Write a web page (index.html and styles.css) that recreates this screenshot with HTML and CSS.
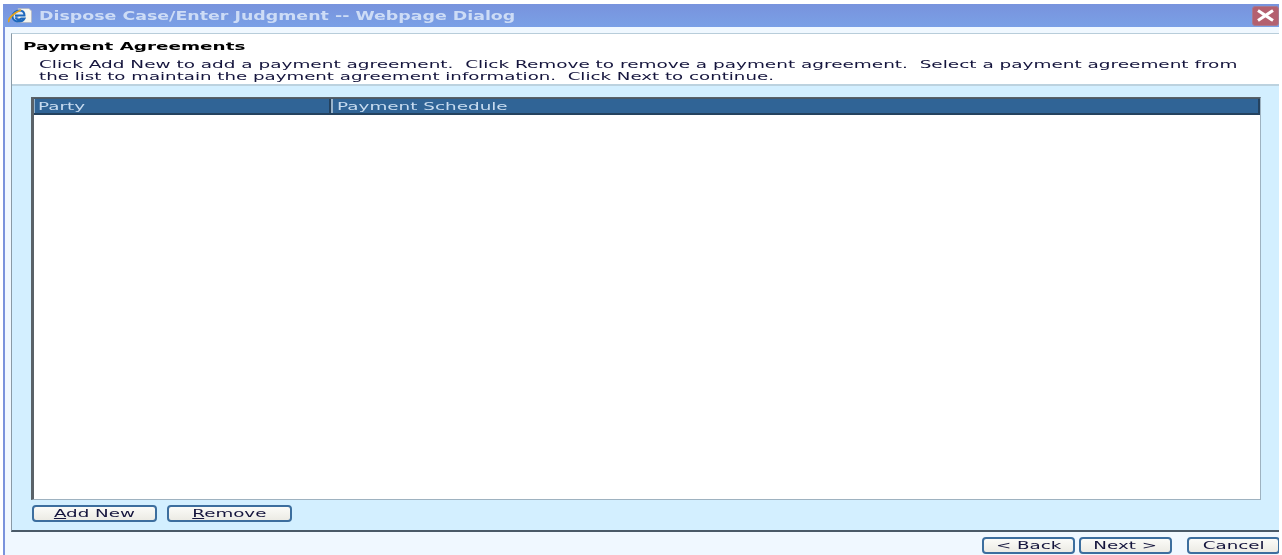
FILE: index.html
```html
<!DOCTYPE html>
<html lang="en">
  <head>
    <meta charset="UTF-8" />
    <title>Dispose Case/Enter Judgment -- Webpage Dialog</title>
    <link rel="stylesheet" href="styles.css">
  </head>
  <body>
    <div class="dialog">
      <div class="title-bar">
        <svg class="ie-icon" width="24" height="15" viewBox="0 0 24 15">
          <path d="M10 .5h11l2.500 2.500v11.500H10z" fill="#f6f6ee" stroke="#b4b8c4" stroke-width="0.8" />
          <path d="M7 7.500h9.500C16.500 4 14 2.500 11.500 2.500 8 2.500 4.500 5 4.500 8.500c0 3.500 3.500 5 6.500 5 2.500 0 4.500-1 5.500-3h-3.200c-1.500 1.800-5 1.300-5.800-1" fill="#dfeaf8" stroke="#1c68bc" stroke-width="2" />
          <path d="M1 14C-.5 11.500 5 5 13 2" fill="none" stroke="#e2a21e" stroke-width="1.800" />
        </svg>
        <span class="wide title-text">Dispose Case/Enter Judgment -- Webpage Dialog</span>
        <div class="close-button">
          <svg width="21" height="13" viewBox="0 0 21 13">
            <path d="M3 1.500 18 11.500M18 1.500 3 11.500" stroke="#fff" stroke-width="3" />
          </svg>
        </div>
      </div>

      <div class="dialog-body">
        <div class="panel">
          <div class="panel-header">
            <h1><span class="wide">Payment Agreements</span></h1>
            <p>
              <span class="wide">Click Add New to add a payment agreement.&nbsp; Click Remove to remove a payment agreement.&nbsp; Select a payment agreement from</span>
              <span class="wide line-two">the list to maintain the payment agreement information.&nbsp; Click Next to continue.</span>
            </p>
          </div>
          <div class="panel-main">
            <div class="list-box">
              <div class="list-head">
                <div class="col-party"><span class="wide">Party</span></div>
                <div class="col-schedule"><span class="wide">Payment Schedule</span></div>
              </div>
            </div>
            <div class="list-actions">
              <button type="button" class="btn btn-list"><span class="wide-center"><u>A</u>dd New</span></button>
              <button type="button" class="btn btn-list"><span class="wide-center"><u>R</u>emove</span></button>
            </div>
          </div>
        </div>
        <div class="footer">
          <button type="button" class="btn btn-nav"><span class="wide-center">&lt; Back</span></button>
          <button type="button" class="btn btn-nav"><span class="wide-center">Next &gt;</span></button>
          <button type="button" class="btn btn-nav btn-cancel"><span class="wide-center">Cancel</span></button>
        </div>
      </div>
    </div>
  </body>
</html>
```

FILE: styles.css
```css
html,
body {
  margin: 0;
  height: 100%;
  overflow: hidden;
}
body {
  background-color: white;
  font-family: "DejaVu Sans", Verdana, sans-serif;
  font-size: 11px;
  color: #14143c;
  padding: 4px 3px 0 3px;
  box-sizing: border-box;
}
.wide {
  display: inline-block;
  white-space: nowrap;
  transform: scaleX(1.67);
  transform-origin: left center;
  filter: blur(0.3px);
}
.wide-center {
  display: inline-block;
  white-space: nowrap;
  transform: scaleX(1.66);
  filter: blur(0.3px);
}
.dialog {
  height: 100%;
  display: flex;
  flex-direction: column;
  overflow: hidden;
}
.title-bar {
  height: 23px;
  flex: none;
  display: flex;
  align-items: center;
  background: linear-gradient(#7893dd, #7aa0e6);
  padding-left: 5px;
}
.ie-icon {
  margin-right: 7px;
  flex: none;
}
.title-text {
  color: #cddcf6;
  font-weight: bold;
  font-size: 12px;
  transform: scaleX(1.45);
}
.close-button {
  margin-left: auto;
  width: 27px;
  height: 20px;
  box-sizing: border-box;
  background-color: #b4606f;
  border: 1px solid #a8798e;
  border-radius: 3px;
  display: flex;
  align-items: center;
  justify-content: center;
}
.dialog-body {
  flex: 1;
  display: flex;
  flex-direction: column;
  background-color: #f0f8ff;
  border-left: 2px solid #7a93dc;
  padding: 6px 0 0 6px;
  min-height: 0;
}
.panel {
  height: 499px;
  flex: none;
  display: flex;
  flex-direction: column;
  border-left: 1px solid #8a9aa6;
  border-top: 1px solid #b8cdda;
  border-bottom: 2px solid #4a5a68;
  box-sizing: border-box;
}
.panel-header {
  height: 52px;
  flex: none;
  box-sizing: border-box;
  background-color: white;
  border-bottom: 2px solid #bcd2df;
  padding: 6px 0 0 11px;
}
.panel-header h1 {
  margin: 0;
  font-size: 11px;
  line-height: 13px;
  font-weight: bold;
  color: #000;
}
.panel-header p {
  margin: 6px 0 0 16px;
  font-size: 11px;
  line-height: 12px;
  white-space: nowrap;
}
.panel-header p .wide {
  display: block;
  transform: scaleX(1.676);
}
.panel-header p .line-two {
  transform: scaleX(1.654);
}
.panel-main {
  flex: 1;
  display: flex;
  flex-direction: column;
  background-color: #d3efff;
  padding: 11px 18px 0 19px;
  min-height: 0;
}
.list-box {
  height: 403px;
  flex: none;
  box-sizing: border-box;
  background-color: white;
  border-left: 3px solid #5a6268;
  border-top: 1px solid #5a6268;
  border-right: 1px solid #9eb2c0;
  border-bottom: 1px solid #9eb2c0;
}
.list-head {
  height: 17px;
  display: flex;
  background-color: #306496;
  border-top: 1px solid #4a5a68;
  border-bottom: 2px solid #24425f;
  box-sizing: border-box;
  color: #c8dcf0;
  font-size: 11px;
  line-height: 15px;
}
.col-party {
  width: 297px;
  flex: none;
  padding-left: 3px;
  box-sizing: border-box;
  border-left: 1px solid #8fb0cc;
  border-right: 2px solid #24425f;
}
.col-schedule {
  flex: 1;
  padding-left: 4px;
  border-left: 2px solid #9ab4cc;
  border-right: 2px solid #24425f;
}
.list-actions {
  display: flex;
  gap: 10px;
  margin-top: 5px;
  margin-left: 1px;
}
.btn {
  height: 17px;
  box-sizing: border-box;
  padding: 0;
  background: linear-gradient(#fbfbf8, #ecebe4);
  border: 2px solid #3c6e9e;
  border-radius: 4px;
  font-family: "DejaVu Sans", Verdana, sans-serif;
  font-size: 11px;
  line-height: 12px;
  color: #14143c;
  cursor: pointer;
  flex: none;
}
.btn-list {
  width: 125px;
}
.footer {
  flex: 1;
  display: flex;
  justify-content: flex-end;
  gap: 4px;
  padding-top: 5px;
}
.btn-nav {
  width: 93px;
}
.btn-cancel {
  margin-left: 11px;
  margin-right: -1px;
}
```
